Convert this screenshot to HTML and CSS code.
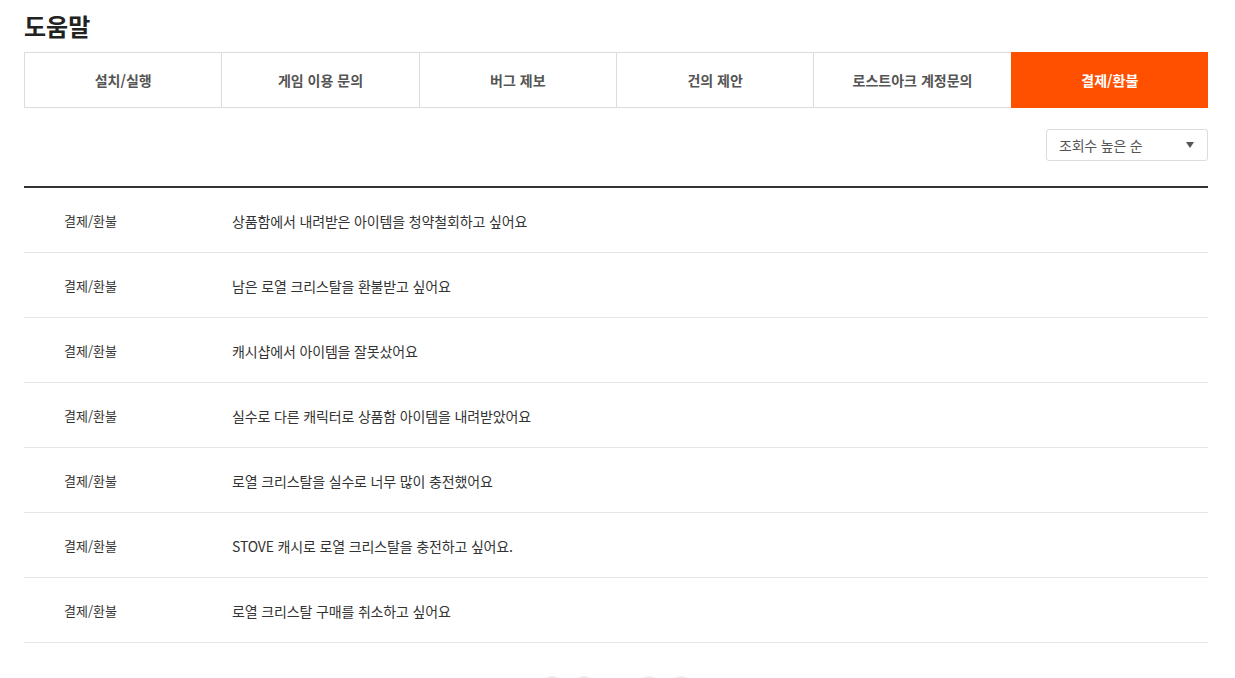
FILE: index.html
```html
<!DOCTYPE html>
<html lang="ko">
<head>
<meta charset="utf-8">
<link rel="stylesheet" href="styles.css">
</head>
<body>
<div class="page">
  <h1 class="title">도움말</h1>
  <ul class="tabs">
    <li class="tab">설치/실행</li>
    <li class="tab">게임 이용 문의</li>
    <li class="tab">버그 제보</li>
    <li class="tab">건의 제안</li>
    <li class="tab">로스트아크 계정문의</li>
    <li class="tab active">결제/환불</li>
  </ul>
  <div class="toolbar">
    <div class="select"><span>조회수 높은 순</span><span class="arrow"></span></div>
  </div>
  <ul class="list">
    <li class="row"><span class="cat">결제/환불</span><span class="subj">상품함에서 내려받은 아이템을 청약철회하고 싶어요</span></li>
    <li class="row"><span class="cat">결제/환불</span><span class="subj">남은 로열 크리스탈을 환불받고 싶어요</span></li>
    <li class="row"><span class="cat">결제/환불</span><span class="subj">캐시샵에서 아이템을 잘못샀어요</span></li>
    <li class="row"><span class="cat">결제/환불</span><span class="subj">실수로 다른 캐릭터로 상품함 아이템을 내려받았어요</span></li>
    <li class="row"><span class="cat">결제/환불</span><span class="subj">로열 크리스탈을 실수로 너무 많이 충전했어요</span></li>
    <li class="row"><span class="cat">결제/환불</span><span class="subj">STOVE 캐시로 로열 크리스탈을 충전하고 싶어요.</span></li>
    <li class="row"><span class="cat">결제/환불</span><span class="subj">로열 크리스탈 구매를 취소하고 싶어요</span></li>
  </ul>
  <div class="pager">
    <span class="pbtn"></span>
    <span class="pbtn"></span>
    <span class="pnums"></span>
    <span class="pbtn"></span>
    <span class="pbtn"></span>
  </div>
</div>
</body>
</html>
```
FILE: styles.css
```css
* { box-sizing: border-box; }
html, body { margin: 0; padding: 0; background: #fff; }
body {
  font-family: "Noto Sans CJK KR", "Noto Sans", sans-serif;
  color: #333;
}
.page {
  width: 1184px;
  margin-left: 24px;
  padding-top: 9px;
}
.title {
  margin: 0;
  font-size: 24px;
  font-weight: 700;
  line-height: 34px;
  color: #222;
  height: 43px;
}
.tabs {
  list-style: none;
  margin: 0;
  padding: 0;
  display: grid;
  grid-template-columns: repeat(6, 1fr);
  height: 56px;
}
.tab {
  display: flex;
  align-items: center;
  justify-content: center;
  font-size: 14px;
  font-weight: 700;
  color: #555;
  border-top: 1px solid #dcdcdc;
  border-bottom: 1px solid #dcdcdc;
  border-left: 1px solid #dcdcdc;
}
.tab.active {
  background: #ff5000;
  color: #fff;
  border-color: #ff5000;
}
.toolbar {
  display: flex;
  justify-content: flex-end;
  padding-top: 21px;
  height: 78px;
}
.select {
  width: 162px;
  height: 32px;
  border: 1px solid #dcdcdc;
  border-radius: 3px;
  display: flex;
  align-items: center;
  justify-content: space-between;
  padding: 0 13px 0 12px;
  font-size: 14px;
  letter-spacing: -0.2px;
  color: #555;
}
.arrow {
  width: 0;
  height: 0;
  border-left: 4px solid transparent;
  border-right: 4px solid transparent;
  border-top: 6px solid #555;
}
.list {
  list-style: none;
  margin: 0;
  padding: 0;
  border-top: 2px solid #333;
}
.row {
  display: flex;
  align-items: center;
  height: 65px;
  padding-top: 1px;
  border-bottom: 1px solid #e5e5e5;
  font-size: 14px;
  color: #333;
}
.cat {
  width: 208px;
  padding-left: 40px;
  flex: none;
  font-size: 13px;
}
.subj {
  flex: 1;
  letter-spacing: -0.15px;
}
.pager {
  display: flex;
  justify-content: flex-start;
  align-items: center;
  gap: 8px;
  padding-top: 33px;
  padding-left: 516px;
}
.pbtn {
  width: 24px;
  height: 24px;
  border-radius: 50%;
  background: #eee;
}
.pnums {
  width: 25px;
  height: 24px;
}
```
